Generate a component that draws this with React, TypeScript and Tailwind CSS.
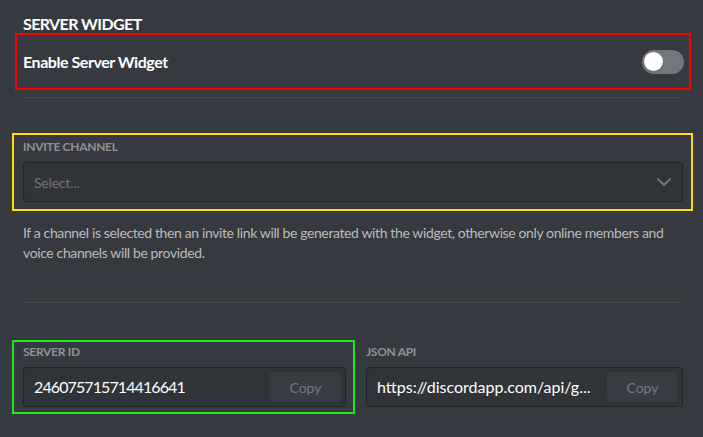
import { ChevronDown } from "lucide-react";

function CopyField({ label, value, tight }: { label: string; value: string; tight?: boolean }) {
  return (
    <div className="flex flex-col">
      <div className="text-[12px] font-bold uppercase text-[#8e9297] leading-4 tracking-[-0.3px] mb-[7px]">{label}</div>
      <div className="h-10 flex items-center bg-[#303338] border border-[#222428] rounded-[3px] pl-[10px] pr-[4px]">
        <span className={"flex-1 truncate text-[16px] text-white leading-5 " + (tight ? "tracking-[-0.9px]" : "")}>{value}</span>
        <button className="ml-2 w-[71px] h-[30px] shrink-0 bg-[#383b41] rounded-[3px] text-[14px] text-[#6f7a8e]">Copy</button>
      </div>
    </div>
  );
}

export default function App() {
  return (
    <div className="w-[703px] h-[437px] bg-[#36393f] font-['Lato','Open_Sans',sans-serif] overflow-hidden">
      <div className="pl-[23px] pr-[20px]">
        <h2 className="pt-[16px] text-[16px] font-bold uppercase text-white leading-4 tracking-[-0.6px]">Server Widget</h2>

        <div className="-mx-[8px] mt-[1px] border-[2px] border-[#ff0000] h-[57px] pl-[6px] pr-[5px] flex items-center justify-between">
          <span className="text-[16px] font-bold text-white tracking-[-0.45px]">Enable Server Widget</span>
          <div className="w-[42px] h-[24px] rounded-full bg-[#72767d] flex items-center px-[2px]">
            <div className="w-[19px] h-[19px] rounded-full bg-white shadow" />
          </div>
        </div>
        <div className="mt-[7px] h-px bg-[#42454a]" />

        <div className="-ml-[11px] -mr-[10px] mt-[35px] border-[2px] border-[#ffdd00] pl-[9px] pr-[8px] pt-[4px] pb-[7px]">
          <div className="text-[12px] font-bold uppercase text-[#8e9297] leading-4 tracking-[-0.3px] mb-[7px]">Invite Channel</div>
          <div className="h-10 flex items-center justify-between bg-[#303338] border border-[#222428] rounded-[3px] pl-[10px] pr-[6px]">
            <span className="text-[14px] text-[#72767d] tracking-[-0.2px]">Select...</span>
            <ChevronDown size={24} strokeWidth={2} className="text-[#72767d]" />
          </div>
        </div>

        <p className="mt-[12px] text-[14px] leading-5 text-[#b9bbbe] tracking-[-0.38px]">
          If a channel is selected then an invite link will be generated with the widget, otherwise only online members and voice channels will be provided.
        </p>

        <div className="mt-[39px] h-px bg-[#42454a]" />

        <div className="mt-[37px] grid grid-cols-[323px_1fr] gap-[20px]">
          <div className="-ml-[11px] -mr-[9px] border-[2px] border-[#1ee61e] pl-[9px] pr-[7px] pt-[2px] pb-[5px]">
            <CopyField label="Server ID" value="246075715714416641" tight />
          </div>
          <div className="pt-[4px]">
            <CopyField label="JSON API" value="https://discordapp.com/api/g..." />
          </div>
        </div>
      </div>
    </div>
  );
}
